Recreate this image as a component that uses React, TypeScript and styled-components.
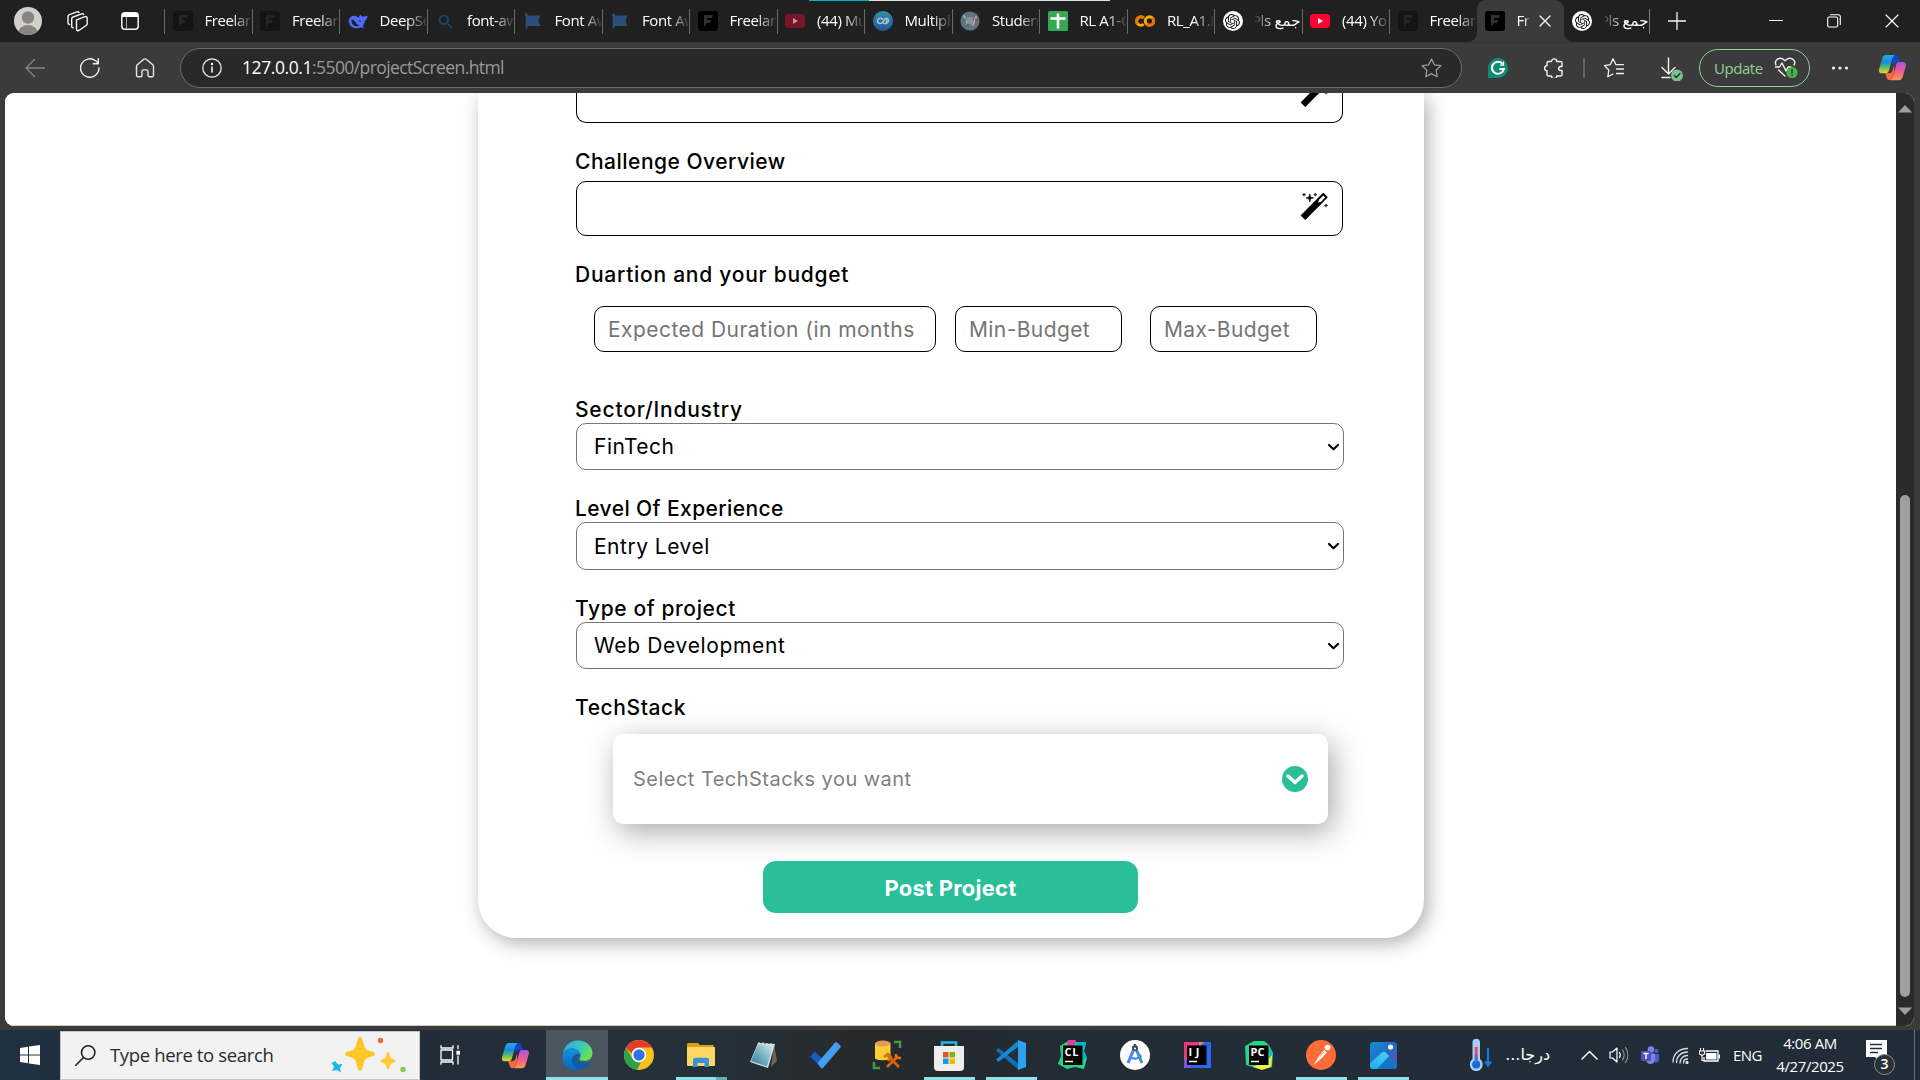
import React from "react";
import styled, { createGlobalStyle } from "styled-components";
import { SiOpenai } from "react-icons/si";

const Global = createGlobalStyle`
  * { box-sizing: border-box; }
  html, body { margin: 0; padding: 0; }
  body { width: 1920px; height: 1080px; overflow: hidden; background: #3b3b3b; font-family: "Open Sans", "Noto Sans", sans-serif; }
  svg { display: block; flex: none; }
`;

const ui = `"Open Sans", "Noto Sans", "DejaVu Sans", sans-serif`;
const form = `Inter, "Liberation Sans", sans-serif`;

const Screen = styled.div`
  width: 1920px; height: 1080px; display: flex; flex-direction: column; overflow: hidden; background: #3b3b3b;
`;

/* ---------- title bar ---------- */
const TitleBar = styled.header`
  height: 42px; flex: none; display: flex; background: #3b3b3b; position: relative;
`;
const TopStrip = styled.div`
  position: absolute; top: 0; left: 809px; width: 301px; height: 1px;
  background: linear-gradient(90deg, #00b5c4 60px, #d9e2dc 60px);
`;
const TitleDark = styled.div<{ $grow?: boolean; $side: "left" | "right" }>`
  height: 42px; background: #202020; display: flex; align-items: center; flex: ${p => (p.$grow ? "1" : "none")};
  border-radius: ${p => (p.$side === "left" ? "0 0 9px 0" : "0 0 0 9px")};
`;
const WindowTools = styled.div`
  width: 164px; height: 42px; padding-left: 14px; display: flex; align-items: center;
`;
const Gap = styled.div<{ $w: number }>`width: ${p => p.$w}px; flex: none;`;
const Tab = styled.div<{ $w?: number; $line?: boolean }>`
  width: ${p => p.$w ?? 87.5}px; height: 42px; flex: none; display: flex; align-items: center; padding-left: 8.5px; position: relative;
  &::before { content: ""; position: absolute; left: 0; top: 9px; width: 1px; height: 25px; background: ${p => (p.$line === false ? "transparent" : "#6a6a6a")}; }
`;
const TabIcon = styled.div`
  width: 20px; height: 20px; flex: none; display: flex; align-items: center; justify-content: center;
`;
const TabTitle = styled.div<{ $w?: number; $rtl?: boolean; $ls?: number }>`
  margin-left: 12px; width: ${p => p.$w ?? 46}px; height: 24px; overflow: hidden; white-space: nowrap; color: #fff;
  font: 15px/23px ${ui}; letter-spacing: ${p => p.$ls ?? -0.4}px; direction: ${p => (p.$rtl ? "rtl" : "ltr")};
  mask-image: linear-gradient(${p => (p.$rtl ? "270deg" : "90deg")}, #000 58%, rgba(0,0,0,0.1) 100%);
`;
const ActiveTab = styled.div`
  width: 87px; height: 42px; flex: none; display: flex; align-items: center; padding-left: 8px; background: #3b3b3b;
  border-radius: 9px 9px 0 0;
`;
const ActiveBack = styled.div`height: 42px; background: linear-gradient(#202020 24px, #3b3b3b 24px);`;
const WinControls = styled.div`
  flex: 1; height: 42px; display: flex; align-items: center; padding-left: 19px; position: relative;
  &::before { content: ""; position: absolute; left: 0; top: 9px; width: 1px; height: 25px; background: #7a7a7a; }
`;

/* ---------- toolbar ---------- */
const Toolbar = styled.nav`
  height: 51px; flex: none; display: flex; align-items: center; padding: 0 0 1px 25px; background: #3b3b3b; border-top: 1px solid #353535;
`;
const AddressBar = styled.div`
  width: 1282px; height: 40px; flex: none; display: flex; align-items: center; border: 1px solid #6b6b6b; border-radius: 20px;
  background: #292929; padding: 0 19px 0 21px;
`;
const Url = styled.div`
  flex: 1; margin-left: 20px; padding-bottom: 1px; font: 17.5px/28px ${ui}; letter-spacing: -0.59px; color: #999; white-space: nowrap;
`;
const UrlHost = styled.span`color: #fff; letter-spacing: -0.42px;`;
const Separator = styled.div`width: 2px; height: 20px; background: #606060;`;
const UpdateButton = styled.button`
  width: 111px; height: 38px; border: 1px solid #93cf96; border-radius: 19px; background: transparent; color: #93cf96; padding: 0 11px 0 14px;
  display: flex; align-items: center; justify-content: space-between; font: 15px/22px ${ui}; letter-spacing: -0.45px;
`;

/* ---------- page ---------- */
const Viewport = styled.main`
  height: 933px; width: 1909px; margin-left: 5px; flex: none; display: flex; border-radius: 9px; overflow: hidden; background: #fff;
`;
const PageArea = styled.div`
  width: 1891px; height: 933px; padding-left: 473px; overflow: hidden; background: #fff; border-bottom: 1px solid #ccc;
`;
const Card = styled.form`
  width: 946px; height: 845px; padding: 0 80px 0 98px; display: flex; flex-direction: column; align-items: flex-start; background: #fff;
  border-radius: 0 0 38px 38px; box-shadow: 4px 5px 19px rgba(0, 0, 0, 0.32);
`;
const WandField = styled.div<{ $cut?: boolean }>`
  width: 767px; height: ${p => (p.$cut ? 30 : 55)}px; flex: none; border: 1px solid #000; border-top-width: ${p => (p.$cut ? 0 : 1)}px;
  border-radius: ${p => (p.$cut ? "0 0 10px 10px" : "10px")}; display: flex; justify-content: flex-end;
  align-items: ${p => (p.$cut ? "flex-end" : "flex-start")}; padding: ${p => (p.$cut ? "0 13px 14px 0" : "10px 13px 0 0")}; overflow: hidden;
`;
const Label = styled.label<{ $mt: number; $ls?: number }>`
  height: 26px; margin-top: ${p => p.$mt}px; padding-top: 1px; margin-left: -1px; flex: none; color: #000; font: 500 21px/26px ${form};
  letter-spacing: ${p => p.$ls ?? 0}px; white-space: nowrap;
`;
const Spacer = styled.div<{ $h: number }>`height: ${p => p.$h}px; flex: none;`;
const BudgetRow = styled.div`height: 46px; margin: 19px 0 0 18px; display: flex; flex: none;`;
const BudgetInput = styled.input<{ $w: number; $ml?: number; $ls?: number }>`
  width: ${p => p.$w}px; height: 46px; margin: 0 0 0 ${p => p.$ml ?? 0}px; padding: 0 21px 0 13px; border: 1px solid #000; border-radius: 10px;
  background: #fff; font: 21px/26px ${form}; letter-spacing: ${p => p.$ls ?? 0}px; outline: none;
  &::placeholder { color: #757575; opacity: 1; }
`;
const SelectBox = styled.div<{ $h?: number; $ls?: number }>`
  width: 768px; height: ${p => p.$h ?? 47}px; margin-top: 1px; flex: none; border: 1px solid #767676; border-radius: 10px; padding: 1px 3px 0 17px;
  display: flex; align-items: center; justify-content: space-between; color: #000; font: 21px/26px ${form}; letter-spacing: ${p => p.$ls ?? 0}px;
`;
const StackPicker = styled.div`
  width: 715px; height: 90px; margin: 14px 0 0 37px; flex: none; border-radius: 10px; padding: 0 20px; display: flex; align-items: center;
  justify-content: space-between; background: #fff; color: #808080; font: 20px/26px ${form}; letter-spacing: 0.47px;
  box-shadow: 5px 8px 30px rgba(0, 0, 0, 0.34);
`;
const SubmitButton = styled.button`
  width: 375px; height: 52px; margin: 37px 0 0 187px; flex: none; border: 0; border-radius: 13px; background: #29bf99; color: #fff;
  font: 700 22px/26px ${form}; letter-spacing: 0.2px; padding: 1px 0 0;
`;
const Scrollbar = styled.div`
  width: 18px; height: 933px; background: #2b2b2b; display: flex; flex-direction: column; align-items: center; padding: 12px 0 11px;
`;
const Thumb = styled.div`width: 10px; height: 502px; margin-top: auto; border-radius: 5px; background: #9f9f9f;`;

/* ---------- taskbar ---------- */
const Taskbar = styled.footer`
  height: 50px; margin-top: 4px; flex: none; display: flex; align-items: center;
  background: linear-gradient(90deg, #203040 0, #222d39 420px, #24303a 700px, #272a2c 860px, #24292e 930px, #222d38 1100px, #212c38 1914px);
`;
const StartButton = styled.div`width: 60px; padding-left: 20px; flex: none;`;
const SearchBox = styled.div`
  width: 360px; height: 49px; flex: none; background: #f2f2f2; border: 1px solid #c8c8c8; display: flex; align-items: center; padding-left: 14px;
`;
const SearchText = styled.div`
  margin-left: 14px; width: 220px; color: #2b2b2b; font: 18.5px/28px ${ui}; letter-spacing: -0.36px; white-space: nowrap;
`;
const TaskItem = styled.div<{ $w?: number; $active?: boolean; $open?: boolean; $stack?: boolean }>`
  width: ${p => p.$w ?? 62}px; height: 50px; flex: none; display: flex; align-items: center; justify-content: center; position: relative;
  background: ${p => (p.$active ? "#4c5660" : "transparent")};
  &::after {
    content: ""; position: absolute; bottom: 0; height: 3px; left: ${p => (p.$active ? 0 : 6)}px; right: ${p => (p.$active ? 0 : 5)}px;
    background: ${p => p.$stack ? "linear-gradient(90deg, #8ce3ea 40px, #6ba9b3 40px)" : p.$active || p.$open ? "#8ce3ea" : "transparent"};
  }
`;
const Weather = styled.div`
  width: 44px; margin-left: 14px; direction: rtl; color: #fff; font: 16px/26px "DejaVu Sans", sans-serif; white-space: nowrap;
`;
const Lang = styled.div`width: 30px; margin-left: 13px; color: #fff; font: 15px/24px ${ui}; letter-spacing: -0.6px;`;
const Clock = styled.div`
  width: 80px; margin-left: 7px; color: #fff; font: 15px/23px ${ui}; letter-spacing: -0.42px; text-align: center; white-space: nowrap;
`;
const Notice = styled.div`width: 32px; height: 34px; margin-left: 16px; position: relative; margin-top: 4px;`;
const NoticeCount = styled.div`
  position: absolute; left: 8px; top: 14px; width: 21px; height: 21px; border-radius: 50%; border: 1px solid #8b8f93; background: #2b3035; color: #fff;
  font: 600 14px/18px ${ui}; text-align: center;
`;
const DesktopEdge = styled.div`width: 6px; height: 50px; margin-left: auto; border-left: 1px solid #66707a;`;

/* ---------- drawings ---------- */
const stroke = (color: string, width = 1.3) => ({ fill: "none", stroke: color, strokeWidth: width, strokeLinecap: "round" as const, strokeLinejoin: "round" as const });

const FreelanceIcon = ({ dim }: { dim?: boolean }) => (
  <svg width="20" height="20" viewBox="0 0 20 20"><rect width="20" height="20" rx="3" fill={dim ? "#141414" : "#000"} />
    <path d="M6 4h9l-1 3H9v2h4l-1 3H9l-3 4z" fill={dim ? "#242424" : "#303030"} /></svg>
);
const DeepSeekIcon = () => (
  <svg width="20" height="20" viewBox="0 0 20 20" fill="#4d6bfe">
    <path d="M1 8.600C2 5.400 5.600 4 8.800 5.400c1 .5 1.500 1.200 2.200 1.200.3-1.200.5-2.300 1.800-3.200.3 1.300 1 2.300 2.300 2.300 1.500 0 2.300-.8 4.300-1-.1 3-1.200 4.300-2.700 5.200-.1 2.200-.9 3.800-2.100 5.200l1.600 1.300c-1.300.7-2.700.4-3.500-.1-2.700 1.700-7.600 1.400-10-1.300C1.100 13.300.300 10.700 1 8.600z" />
    <path d="M3.800 8.500c2.400.3 3.500 2.400 4.700 4.100 1.100 1.500 2.300 1.700 3.200 1.800-2.800 1.200-6.400.4-7.700-2-.6-1.200-.7-2.600-.2-3.900zM11 9.300c1.200-.2 2 .6 2 1.600-1 .2-1.900-.5-2-1.600z" fill="#202020" />
  </svg>
);
const SearchGlyph = () => <svg width="14" height="14" viewBox="0 0 14 14" {...stroke("#1b4468", 2)}><circle cx="5.800" cy="5.800" r="4.300" /><path d="M9 9l4 4" /></svg>;
const FlagIcon = () => (
  <svg width="20" height="20" viewBox="0 0 20 20" fill="#2b4f78"><circle cx="3.500" cy="4" r="1.700" /><path d="M2.700 4h1.700v13.500H2.700zM3.500 4.600h14l-2 5.200 2 5.200h-14z" /></svg>
);
const YoutubeIcon = ({ dim }: { dim?: boolean }) => (
  <svg width="20" height="20" viewBox="0 0 20 20"><rect y="3" width="20" height="14" rx="3.500" fill={dim ? "#7a1428" : "#ff0033"} /><path d="M8 7l5 3-5 3z" fill={dim ? "#b0a0a4" : "#fff"} /></svg>
);
const MultiIcon = () => (
  <svg width="20" height="20" viewBox="0 0 20 20"><defs><linearGradient id="mu" x1="0" y1="0" x2="0" y2="1"><stop stopColor="#2d92a8" /><stop offset="1" stopColor="#2553a0" /></linearGradient></defs>
    <circle cx="10" cy="10" r="10" fill="url(#mu)" /><path d="M9.500 8.200c-1.800-1.500-5-1-5 1.800 0 3 3.800 3.200 5.200 1.200L12 7.800c1.300-1.300 3.500-.3 3.500 1.800 0 2.600-2.500 3-5 2.900M13.500 12.500V8.500" {...stroke("#b0bcc6", 1.500)} /></svg>
);
const StudentIcon = () => (
  <svg width="20" height="20" viewBox="0 0 20 20"><rect width="20" height="20" rx="2" fill="#1c2733" /><circle cx="10" cy="10" r="9.500" fill="#68727b" />
    <path d="M4 5l4 9 2-6 3 6 3-8" {...stroke("#9fa9ae", 2)} /><path d="M7 6h6v7H7z" fill="#87919a" /><circle cx="4.500" cy="9" r="1.500" fill="#2f6f9b" /><circle cx="16.500" cy="9" r="1.400" fill="#a0483a" /><circle cx="8" cy="14" r="1.200" fill="#306b99" /></svg>
);
const SheetsIcon = () => <svg width="20" height="20"><rect width="20" height="20" rx="1.500" fill="#34a853" /><path d="M10 2.500v15M2.500 7.500h15" stroke="#fff" strokeWidth="2.600" /></svg>;
const ColabIcon = () => (
  <svg width="20" height="20" viewBox="0 0 20 20" fill="none" strokeWidth="3"><path d="M8.700 7A4.200 4.200 0 1 0 8.700 13.200" stroke="#f9ab00" /><circle cx="14.500" cy="10" r="4.200" stroke="#f9ab00" /><path d="M11.500 13a4.200 4.200 0 0 0 6-6" stroke="#e8710a" /><path d="M8.700 7a4.200 4.200 0 0 0-6 6" stroke="#e8710a" /></svg>
);
const GptDisc = styled.div`width: 20px; height: 20px; border-radius: 50%; background: #fff; color: #111; display: flex; align-items: center; justify-content: center; flex: none;`;
const GptIcon = () => <GptDisc><SiOpenai size={15} /></GptDisc>;

const CopilotIcon = ({ id }: { id: string }) => (
  <svg width="29" height="27" viewBox="0 0 29 27">
    <defs>
      <linearGradient id={id + "a"} x1="0" y1="0" x2="0" y2="1"><stop stopColor="#20a8f0" /><stop offset=".4" stopColor="#178cdb" /><stop offset=".7" stopColor="#64bd63" /><stop offset="1" stopColor="#f2d41b" /></linearGradient>
      <linearGradient id={id + "b"} x1="0" y1="0" x2="0" y2="1"><stop stopColor="#a653f1" /><stop offset=".5" stopColor="#ed5a92" /><stop offset="1" stopColor="#ff9a4c" /></linearGradient>
    </defs>
    <path d="M14 1h3.500c1.700 0 2.600 1 3 2.600L21.800 8h-4l-3 3z" fill="#1445c8" />
    <path d="M8 1h8.500c-1.500 1-2 2.800-2.600 5l-3 10.500c-.5 1.700-1.500 2.700-3.200 2.700H3.500C1 19.200.5 17.200 1.100 15L4.200 4.500C4.900 2.300 6 1 8 1z" fill={`url(#${id}a)`} />
    <path d="M21 8h4c2.600 0 3.400 2 2.800 4.200l-3.100 10.500c-.7 2.200-1.900 3.500-3.900 3.500h-8.300c1.700-1 2.100-2.700 2.700-4.700l3-10.700C18.700 9 19.500 8 21 8z" fill={`url(#${id}b)`} />
    <path d="M7 19.200h4c1.900 0 3-.9 3.600-2.700l1.500-5.200v6.700l-1.500 5c-.5 1.600-1.300 2.800-2.600 3.200-2 0-2.900-1-3.300-2.600z" fill="#ff6a3c" />
  </svg>
);

const WandIcon = () => (
  <svg width="30" height="29" viewBox="0 0 30 29">
    <path d="M1.600 23.500L23.600 1.200Q24.300.6 25 1.300L28.200 4.600Q28.800 5.300 28.200 6L6.300 28z" fill="#000" />
    <path d="M20.200 7.500L24.300 3.600l1.800 1.800-4 4.300-3.200 1.100z" fill="#fff" />
    <path d="M10.800 2l.9 3 2.900.9-2.900.9-.9 3.200-.9-3.200L7 5.900 9.900 5z" fill="#000" stroke="#000" strokeWidth=".6" />
    <path d="M5 1v3.200M3.400 2.600h3.200M16.300 1v3.200M14.700 2.600h3.200M27 12v3.200M25.400 13.600h3.200" stroke="#222" strokeWidth="1.200" />
  </svg>
);
const Caret = () => <svg width="13" height="9" viewBox="0 0 13 9" {...stroke("#000", 2.200)}><path d="M2 2l4.500 4.300L11 2" /></svg>;

const EdgeIcon = () => (
  <svg width="31" height="31" viewBox="0 0 31 31">
    <defs><linearGradient id="e1" x1="0" y1="0" x2="1" y2=".4"><stop stopColor="#27a8e8" /><stop offset=".6" stopColor="#37c8bf" /><stop offset="1" stopColor="#67df58" /></linearGradient>
      <linearGradient id="e2" x1="0" y1="0" x2="0" y2="1"><stop stopColor="#1690dc" /><stop offset="1" stopColor="#0868bf" /></linearGradient></defs>
    <path d="M1 14C2 6 8 .5 15.500.5 24 .5 30.500 6 30.500 13c0 5-3.500 8-8 8-3.500 0-5.300-1-5-2.300.2-1 1.300-1.500 1-4C18 11 14.500 8.500 10 8.500 5 8.500 2 11 1 14z" fill="url(#e1)" />
    <path d="M.5 17C1 11.500 5 8.500 10 8.500c4.500 0 8.200 2.500 8.500 6.200-5-2-9 1.300-8.500 6 .5 4.500 4.300 8 9 9-9 2.500-19-3-18.500-12.700z" fill="url(#e2)" />
    <path d="M18 14.500c-4-.8-8 1.700-8 6.300 0 4.700 4 8.700 9 8.700 4.600-1 8-3.700 9.600-6.600.4-.8-.3-1.200-1-.8-3.500 2-8.800 1.500-10.900-1.300-1.600-2.100-.6-4.300 1.300-6.300z" fill="#115aa5" />
  </svg>
);
const ChromeIcon = () => (
  <svg width="30" height="30" viewBox="0 0 30 30"><circle cx="15" cy="15" r="15" fill="#fbc116" />
    <path d="M15 0c5.500 0 10.400 3 13 7.500H15c-4 0-7 3-7.500 6L2 7.500C4.700 3 9.500 0 15 0z" fill="#e33b2e" />
    <path d="M2 7.500l6.500 11.300c2 3.400 6 4.400 8.500 3.500L13 29.900C5.500 29 0 22.800 0 15c0-2.700.7-5.300 2-7.500z" fill="#2da14b" />
    <circle cx="15" cy="15" r="7.200" fill="#fff" /><circle cx="15" cy="15" r="5.700" fill="#2c73ea" /></svg>
);
const FolderIcon = () => (
  <svg width="28" height="24" viewBox="0 0 28 24"><path d="M0 1.500C0 .7.500 0 1.500 0H11l2 2h13.500v4H0z" fill="#dca010" /><rect y="4" width="28" height="19" rx="1" fill="#ffd765" />
    <path d="M6 24v-7c0-1.500 1-2.300 2.300-2.300h11.400c1.300 0 2.300.8 2.300 2.300v7h-4.500v-4h-7v4z" fill="#3d91d6" /></svg>
);
const NotepadIcon = () => (
  <svg width="29" height="28" viewBox="0 0 29 28"><defs><linearGradient id="np" x1="0" y1="1" x2="1" y2="0"><stop stopColor="#287c91" /><stop offset=".6" stopColor="#88bdc9" /><stop offset="1" stopColor="#d5e9ed" /></linearGradient></defs>
    <path d="M25 3l3 17-6 6z" fill="#6a6454" /><path d="M9 2l17 1-7 24L1 21z" fill="#d8e1e2" /><path d="M9 3l15 1.500-6 21L2 20z" fill="url(#np)" /><path d="M10 1v3M14 1v3M18 2v3M22 2v3" stroke="#ddd" /></svg>
);
const TodoIcon = () => <svg width="31" height="28" viewBox="0 0 31 28"><path d="M0 15.500L5 10.500l9 9-2 8z" fill="#185abd" /><path d="M7.500 22L25 1.500c.6-.7 1.400-.7 2 0l3.400 3c.6.6.6 1.200 0 1.900L13 27c-.6.6-1.400.6-2 0z" fill="#41a0ee" /></svg>;
const DbToolIcon = () => (
  <svg width="30" height="30" viewBox="0 0 30 30"><path d="M3 3v15c0 3 15.500 3 15.500 0V3z" fill="#f9cd35" /><ellipse cx="10.800" cy="3.500" rx="7.800" ry="3" fill="#e89b57" /><path d="M22 2h6v6M2 22v6h6" fill="none" stroke="#419c45" strokeWidth="2.500" />
    <path d="M15 27l11-11M15 15l12 12" stroke="#d9650d" strokeWidth="2.700" /><path d="M12 17l4-3 3 3-3 4M24 14v4h5" fill="none" stroke="#e36c0d" strokeWidth="2.500" /></svg>
);
const StoreIcon = () => (
  <svg width="30" height="31" viewBox="0 0 30 31"><path d="M8 7V2.500h14V7" fill="none" stroke="#27b1ed" strokeWidth="2.600" /><path d="M0 6h30v21c0 2.500-1 4-4 4H4c-3 0-4-1.500-4-4z" fill="#eee" />
    <path d="M9 12h5.500v5.500H9z" fill="#f05123" /><path d="M15.500 12H21v5.500h-5.500z" fill="#7eb900" /><path d="M9 18.500h5.500V24H9z" fill="#00a3ee" /><path d="M15.500 18.500H21V24h-5.500z" fill="#feb800" /></svg>
);
const CodeIcon = () => (
  <svg width="30" height="30" viewBox="0 0 30 30"><path d="M0 10.500L2.500 8 23 24v6z" fill="#0d70b8" /><path d="M0 19.500L2.500 22 23 6V0z" fill="#1687d2" /><path d="M22 0l8 3v24l-8 3z" fill="#2ba3ee" /><path d="M22 8v14l-9-7z" fill="#252e37" /></svg>
);
const LogoText = styled.text`font: 700 11px "Open Sans", sans-serif; fill: #fff;`;
const JetBrains = ({ name, kind }: { name: string; kind: "cl" | "ij" | "pc" }) => (
  <svg width="30" height="30" viewBox="0 0 30 30">
    {kind === "cl" && <><path d="M2 6L10 1l9 1 9 1-2 8 3 7-3 11-9-2-8 2-9-5 3-8z" fill="#20d785" /><path d="M18 2l10 0-2 9 3 7-8 3z" fill="#08b6c9" /><path d="M10 0h8l-2 7h-7z" fill="#e93c99" /></>}
    {kind === "ij" && <><path d="M2 2h27v26H2z" fill="#2768ee" /><path d="M2 2h15l-8 15-7 4z" fill="#ed3979" /><path d="M2 20l7-4v12H2z" fill="#7855df" /><path d="M17 2h5l-5 5z" fill="#f58b3a" /></>}
    {kind === "pc" && <><path d="M1 6l9-5 10 0 5 4 4 8-1 14-10 2-9-2-7-2z" fill="#25d789" /><path d="M22 9l6 7-1 11-9 3-9-3 12-6z" fill="#edf33e" /><path d="M24 8l5 5-4 6z" fill="#16b8dc" /></>}
    <rect x="5" y="5.500" width="19.500" height="19.500" fill="#000" /><LogoText x="6.500" y="15.500" textLength={kind === "ij" ? 11 : 14}>{name}</LogoText><path d="M7 21.500h8" stroke="#fff" strokeWidth="1.500" />
  </svg>
);
const StudioIcon = () => (
  <svg width="30" height="30" viewBox="0 0 30 30"><circle cx="15" cy="15" r="15" fill="#fff" /><path d="M14 9L8 23M16 9l6 14" stroke="#4285f4" strokeWidth="3" /><path d="M9.500 16c3 3.500 8 3.500 11 0" fill="none" stroke="#4b8df5" strokeWidth="2.500" /><path d="M19 13l3 3-2 3z" fill="#27a85a" /><circle cx="15" cy="8" r="3" fill="#394a58" /><path d="M15 4v3" stroke="#394a58" strokeWidth="2" /><circle cx="15" cy="8.500" r="1" fill="#fff" /></svg>
);
const PostmanIcon = () => (
  <svg width="30" height="30" viewBox="0 0 30 30"><circle cx="15" cy="15" r="15" fill="#ff6c37" /><circle cx="21.500" cy="7.500" r="2.800" fill="#fff" /><path d="M18 10l2.800 2.200-4.300 5.300-9 7.500 5.500-9z" fill="#fff" /><path d="M18 11.500l-4 5" stroke="#ff8d65" /></svg>
);
const PhotosIcon = () => (
  <svg width="27" height="27" viewBox="0 0 27 27"><defs><linearGradient id="ph" x1="0" y1="0" x2="1" y2="1"><stop stopColor="#128ddb" /><stop offset=".5" stopColor="#246bbc" /><stop offset="1" stopColor="#704bb5" /></linearGradient><linearGradient id="ph2" x1="0" y1="1" x2="1" y2="0"><stop stopColor="#1ea9e7" /><stop offset="1" stopColor="#4ad4fa" /></linearGradient></defs>
    <rect width="27" height="27" rx="3" fill="url(#ph)" /><path d="M0 21L12 10.500c1.200-1 2.300-1 3.500 0L27 21v3c0 2-1 3-3 3H3c-2 0-3-1-3-3z" fill="#1673c6" /><path d="M0 21L12 10.500c1.200-1 2.300-1 3.500 0l3.500 3.500L7 27H3c-2 0-3-1-3-3z" fill="url(#ph2)" /><circle cx="20.500" cy="5" r="2.600" fill="#e7f4ff" /></svg>
);

const tabs: { icon: React.ReactNode; title: string; rtl?: boolean }[] = [
  { icon: <FreelanceIcon dim />, title: "Freelan" }, { icon: <FreelanceIcon dim />, title: "Freelan" },
  { icon: <DeepSeekIcon />, title: "DeepSe" }, { icon: <SearchGlyph />, title: "font-aw" },
  { icon: <FlagIcon />, title: "Font Aw" }, { icon: <FlagIcon />, title: "Font Aw" },
  { icon: <FreelanceIcon />, title: "Freelan" }, { icon: <YoutubeIcon dim />, title: "(44) Mu" },
  { icon: <MultiIcon />, title: "Multipl" }, { icon: <StudentIcon />, title: "Student" },
  { icon: <SheetsIcon />, title: "RL A1-G" }, { icon: <ColabIcon />, title: "RL_A1.i" },
  { icon: <GptIcon />, title: "جمع Pls", rtl: true }, { icon: <YoutubeIcon />, title: "(44) Yo" },
  { icon: <FreelanceIcon dim />, title: "Freelan" },
];

export default function App() {
  return (
    <Screen>
      <Global />
      <TitleBar>
        <TitleDark $side="left">
          <WindowTools>
            <svg width="28" height="28" viewBox="0 0 28 28"><defs><clipPath id="av"><circle cx="14" cy="14" r="14" /></clipPath></defs><g clipPath="url(#av)"><rect width="28" height="28" fill="#d2d0cd" /><circle cx="14" cy="10.500" r="6.200" fill="#8a8582" /><ellipse cx="14" cy="25.500" rx="9.500" ry="7.500" fill="#8a8582" /></g></svg>
            <Gap $w={25} />
            <svg width="21" height="21" viewBox="0 0 21 21" {...stroke("#f4f4f4", 1.400)}><path d="M9.500 8.800l8.500-3.100c1.200-.4 2.200.2 2.200 1.400v5.700c0 .8-.4 1.400-1.200 1.700l-6.700 4.700c-1.500 1-2.800.4-2.800-1.200z" /><path d="M6.300 16.700c-1 .2-1.600-.4-1.600-1.500V8.100c0-1 .4-1.700 1.400-2.100l8.600-3.200c.9-.3 1.600 0 1.900.8" /><path d="M2.600 13.500C1.400 13.400 1 12.700 1 11.700V5.600c0-1 .5-1.600 1.400-2L10 .9c.9-.3 1.500-.1 2 .6" /></svg>
            <Gap $w={33} />
            <svg width="18" height="18" viewBox="0 0 18 18"><rect x=".8" y=".8" width="16.400" height="16.400" rx="3" fill="none" stroke="#f4f4f4" strokeWidth="1.500" /><path d="M1 5V3.500C1 2 2 1 3.500 1h11C16 1 17 2 17 3.500V5z" fill="#fff" /><path d="M5.500 5v12" stroke="#aaa" strokeWidth="1" /></svg>
          </WindowTools>
          {tabs.map((t, i) => (
            <Tab key={i}><TabIcon>{t.icon}</TabIcon><TabTitle $rtl={t.rtl}>{t.title}</TabTitle></Tab>
          ))}
        </TitleDark>
        <ActiveBack>
          <ActiveTab>
            <FreelanceIcon /><TabTitle $w={13}>Fr</TabTitle><Gap $w={9} />
            <svg width="12" height="12" viewBox="0 0 12 12" {...stroke("#f4f4f4", 1.400)}><path d="M1 1l10 10M11 1L1 11" /></svg>
          </ActiveTab>
        </ActiveBack>
        <TitleDark $side="right" $grow>
          <Tab $w={85} $line={false}><GptIcon /><TabTitle $rtl>جمع Pls</TabTitle></Tab>
          <WinControls>
            <svg width="18" height="18" viewBox="0 0 18 18" {...stroke("#f4f4f4", 1.300)}><path d="M9 .5v17M.5 9h17" /></svg>
            <Gap $w={83} />
            <svg width="14" height="14" viewBox="0 0 14 14" {...stroke("#fff", 1)}><path d="M.5 6.500h13" /></svg>
            <Gap $w={44} />
            <svg width="14" height="14" viewBox="0 0 14 14" {...stroke("#fff", 1.100)}><rect x=".7" y="3" width="10" height="10" rx="1.500" /><path d="M3.500.8h7.800c1.200 0 2 .8 2 2v7.700" /></svg>
            <Gap $w={44} />
            <svg width="14" height="14" viewBox="0 0 14 14" {...stroke("#fff", 1.100)}><path d="M1 1l12 12M13 1L1 13" /></svg>
          </WinControls>
        </TitleDark>
        <TopStrip />
      </TitleBar>

      <Toolbar>
        <svg width="20" height="20" viewBox="0 0 20 20" {...stroke("#858585", 1.300)}><path d="M19.500 10H1M9.500 1.500L1 10l8.500 8.500" /></svg>
        <Gap $w={35} />
        <svg width="20" height="20" viewBox="0 0 20 20" {...stroke("#f2f2f2", 1.400)}><path d="M19 10a9.200 9.200 0 1 1-3.500-7.200L18.300 5" /><path d="M18.300.8v5h-5" /></svg>
        <Gap $w={35} />
        <svg width="20" height="20" viewBox="0 0 20 20" {...stroke("#e9e9e9", 1.400)}><path d="M1.500 8.500c0-.7.200-1.200.8-1.700L8.800 1.300c.8-.6 1.600-.6 2.400 0l6.500 5.500c.6.500.8 1 .8 1.700v8.700c0 1-.6 1.600-1.600 1.600h-2.300c-1 0-1.600-.6-1.600-1.600v-4c0-.8-.5-1.300-1.300-1.300H8.300c-.8 0-1.300.5-1.300 1.300v4c0 1-.6 1.600-1.600 1.600H3.100c-1 0-1.600-.6-1.600-1.600z" /></svg>
        <Gap $w={25} />
        <AddressBar>
          <svg width="20" height="20" viewBox="0 0 20 20" {...stroke("#f2f2f2", 1.200)}><circle cx="10" cy="10" r="9.200" /><path d="M10 9v5" strokeWidth="1.600" /><circle cx="10" cy="6" r=".6" fill="#fff" /></svg>
          <Url><UrlHost>127.0.0.1</UrlHost>:5500/projectScreen.html</Url>
          <svg width="21" height="20" viewBox="0 0 21 20" {...stroke("#9a9a9a", 1.300)}><path d="M10.500 1l2.800 5.800 6.500.9-4.700 4.500 1.100 6.500-5.700-3.100-5.700 3.100 1.100-6.500L1.200 7.700l6.500-.9z" /></svg>
        </AddressBar>
        <Gap $w={26} />
        <svg width="20" height="20" viewBox="0 0 20 20"><path d="M0 10A10 10 0 1 1 10 20H0z" fill="#0f8b78" /><path d="M14.800 6.200A6 6 0 1 0 15.800 11h-4.500" fill="none" stroke="#fff" strokeWidth="2.100" /><path d="M15.500 3.500v3.700H12" fill="none" stroke="#fff" strokeWidth="1.200" /></svg>
        <Gap $w={36} />
        <svg width="20" height="20" viewBox="0 0 20 20" {...stroke("#f2f2f2", 1.400)}><path d="M4.500 3.500h3a2.600 2.600 0 0 1 5.200 0h3.800c.9 0 1.500.6 1.500 1.500v3.500h-1.300a2 2 0 0 0 0 4H18v4c0 .9-.6 1.500-1.500 1.500h-3.800a2.600 2.600 0 0 1-5.200 0H4.500c-.9 0-1.500-.6-1.500-1.500v-3.700a2.500 2.500 0 0 1 0-5V5c0-.9.6-1.500 1.500-1.500z" /></svg>
        <Gap $w={19} /><Separator /><Gap $w={19} />
        <svg width="20" height="20" viewBox="0 0 20 20" {...stroke("#f2f2f2", 1.300)}><path d="M12 6.700L9 .8 6.200 6.700l-5.600 1L4.800 12l-1 6.800L9 16M12 6.700h7.500M12.500 11h7M12.500 15.500h7" /></svg>
        <Gap $w={36} />
        <svg width="24" height="26" viewBox="0 0 24 26"><path d="M8.500 3v16M2 12.500L8.500 19l6.500-6.500M2 22.500h8" {...stroke("#f2f2f2", 1.400)} /><circle cx="17" cy="20.500" r="6" fill="#79c18d" /><path d="M14.300 20.500l2 2 3.700-4" {...stroke("#26352a", 1.300)} /></svg>
        <Gap $w={15} />
        <UpdateButton type="button">Update
          <svg width="24" height="22" viewBox="0 0 24 22"><path d="M2 8C.2 4.500 3 1.200 6.200 1.200c2 0 3.500 1 4.800 2.500 1.300-1.500 2.800-2.500 4.800-2.500C19.500 1.200 22 5 20 8M1.500 10h4l2.500-4 4 8 2-4h3M4.500 13l6.500 6" {...stroke("#f2f2f2", 1.400)} /><circle cx="18" cy="15.500" r="5.600" fill="#4caf50" /><path d="M18 12.500v3.500M18 18v.4" {...stroke("#174b1a", 1.500)} /></svg>
        </UpdateButton>
        <Gap $w={20} />
        <svg width="20" height="4" viewBox="0 0 20 4" fill="#f2f2f2"><circle cx="3.500" cy="2" r="1.600" /><circle cx="10" cy="2" r="1.600" /><circle cx="16.500" cy="2" r="1.600" /></svg>
        <Gap $w={28} />
        <CopilotIcon id="c1" />
      </Toolbar>

      <Viewport>
        <PageArea>
          <Card>
            <WandField $cut><WandIcon /></WandField>
            <Label $mt={25} $ls={0.5}>Challenge Overview</Label>
            <Spacer $h={7} />
            <WandField><WandIcon /></WandField>
            <Label $mt={25} $ls={0.74}>Duartion and your budget</Label>
            <BudgetRow>
              <BudgetInput $w={342} $ls={0.46} placeholder="Expected Duration (in months)" />
              <BudgetInput $w={167} $ml={19} $ls={0.4} placeholder="Min-Budget" />
              <BudgetInput $w={167} $ml={28} $ls={0.35} placeholder="Max-Budget" />
            </BudgetRow>
            <Label $mt={44} $ls={0.8}>Sector/Industry</Label>
            <SelectBox $ls={0.5}>FinTech<Caret /></SelectBox>
            <Label $mt={25} $ls={0.4}>Level Of Experience</Label>
            <SelectBox $h={48} $ls={0.5}>Entry Level<Caret /></SelectBox>
            <Label $mt={25} $ls={0.6}>Type of project</Label>
            <SelectBox $ls={0.66}>Web Development<Caret /></SelectBox>
            <Label $mt={25} $ls={0.6}>TechStack</Label>
            <StackPicker>Select TechStacks you want
              <svg width="26" height="26" viewBox="0 0 26 26"><circle cx="13" cy="13" r="13" fill="#29bf99" /><path d="M6 10l7 6.500L20 10" {...stroke("#fff", 3.400)} /></svg>
            </StackPicker>
            <SubmitButton type="button">Post Project</SubmitButton>
          </Card>
        </PageArea>
        <Scrollbar>
          <svg width="14" height="8" viewBox="0 0 14 8"><path d="M7 0l7 7.500H0z" fill="#9f9f9f" /></svg>
          <Thumb />
          <Spacer $h={10} />
          <svg width="14" height="8" viewBox="0 0 14 8"><path d="M7 8l7-7.500H0z" fill="#9f9f9f" /></svg>
        </Scrollbar>
      </Viewport>

      <Taskbar>
        <StartButton><svg width="20" height="20" viewBox="0 0 20 20" fill="#fff"><path d="M0 3l8-1.200v7.700H0zM9 1.600L20 0v9.500H9zM0 10.500h8v7.700L0 17zM9 10.500h11V20L9 18.400z" /></svg></StartButton>
        <SearchBox>
          <svg width="21" height="21" viewBox="0 0 21 21" {...stroke("#222", 1.600)}><circle cx="13.200" cy="7.500" r="6.700" /><path d="M8.500 12.500L.8 20.200" /></svg>
          <SearchText>Type here to search</SearchText>
          <svg width="78" height="36" viewBox="0 0 78 36"><path d="M30 0c3.500 0 3 10.500 6.500 12.500s8.500 2 8.500 4.500-5 2.500-8.500 4.500-3 12.500-6.500 12.500-3-10.500-6.500-12.500-8.500-2-8.500-4.500 5-2.500 8.500-4.500S26.500 0 30 0z" fill="#ffc629" /><path d="M58 15c2 0 1.500 5.500 3.500 6.500s4 1 4 2.500-2 1.500-4 2.500-1.500 6-3.500 6-1.500-5-3.500-6-4-1-4-2.500 2-1.500 4-2.500 1.500-6.500 3.500-6.500z" fill="#ffca37" /><path d="M5 24l3 3.500 4.500-.5-2.500 4 1 4.500-4-2.500-5 1 2-4.500-2.500-3.500z" fill="#1eb5f1" /><circle cx="50.500" cy="3.500" r="2.700" fill="#f26b38" /><circle cx="73" cy="32.500" r="2.700" fill="#8bc652" /></svg>
        </SearchBox>
        <TaskItem $w={60}><svg width="20" height="20" viewBox="0 0 20 20" {...stroke("#fff", 1.300)}><rect x="1" y="5" width="11.500" height="10" /><path d="M1 .7V3h12V.7M1 19.300V17h12v2.300M18 .7v3M18 11v8" /><path d="M17 6.300h2.400v2.800H17z" fill="#fff" /></svg></TaskItem>
        <Gap $w={4} />
        <TaskItem><CopilotIcon id="c2" /></TaskItem>
        <TaskItem $active><EdgeIcon /></TaskItem>
        <TaskItem><ChromeIcon /></TaskItem>
        <TaskItem $stack><FolderIcon /></TaskItem>
        <TaskItem><NotepadIcon /></TaskItem>
        <TaskItem><TodoIcon /></TaskItem>
        <TaskItem><DbToolIcon /></TaskItem>
        <TaskItem $open><StoreIcon /></TaskItem>
        <TaskItem $open><CodeIcon /></TaskItem>
        <TaskItem><JetBrains name="CL" kind="cl" /></TaskItem>
        <TaskItem><StudioIcon /></TaskItem>
        <TaskItem><JetBrains name="IJ" kind="ij" /></TaskItem>
        <TaskItem><JetBrains name="PC" kind="pc" /></TaskItem>
        <TaskItem $open><PostmanIcon /></TaskItem>
        <TaskItem $open><PhotosIcon /></TaskItem>
        <Gap $w={55} />
        <svg width="23" height="34" viewBox="0 0 23 34"><path d="M3.500 4c0-4.500 7.500-4.500 7.500 0v17c5 4 2.500 12-3.700 12S-1.500 25 3.500 21z" fill="#a4cffb" /><path d="M7.200 9v16" stroke="#e14c65" strokeWidth="3" /><circle cx="7.200" cy="26.500" r="4" fill="#126bd2" /><path d="M7.200 17v9" stroke="#4770cb" strokeWidth="2.500" /><path d="M19 10v17M16 23.500l3 4 3-4" fill="none" stroke="#1976db" strokeWidth="2.200" /></svg>
        <Weather>درجا...</Weather>
        <Gap $w={31} />
        <svg width="17" height="10" viewBox="0 0 17 10" {...stroke("#fff", 1.500)}><path d="M1 9l7.500-7.500L16 9" /></svg>
        <Gap $w={11} />
        <svg width="21" height="18" viewBox="0 0 21 18" {...stroke("#fff", 1.200)}><path d="M1 6v6h2.500L8 16V2L3.500 6zM10.500 6.500c1 1.500 1 3.500 0 5" /><path d="M13.500 4c2 3 2 7 0 10M16.500 1.500c3 4.500 3 10.500 0 15" stroke="#8a9299" /></svg>
        <Gap $w={11} />
        <svg width="18" height="19" viewBox="0 0 18 19"><circle cx="10" cy="3.500" r="3.300" fill="#7b83eb" /><circle cx="15.500" cy="5" r="2" fill="#5059c9" /><path d="M5 7.500h9v6c0 6-9 6-9 0z" fill="#7b83eb" /><path d="M14 8h4v5.500c0 2.500-2 3.500-4 3z" fill="#5059c9" /><rect y="5" width="10" height="10" rx="1" fill="#4b53bc" /><path d="M2.500 7.500h5M5 7.500v5.500" stroke="#fff" strokeWidth="1.400" /></svg>
        <Gap $w={13} />
        <svg width="17" height="17" viewBox="0 0 17 17" {...stroke("#d9dcdf", 1.300)}><path d="M1 15C1 7 7 1.500 15.500 1.500M4.500 15.500c0-6 4.500-10.500 11-10.500M8 16c0-4 3-7.500 7.500-7.500M11.500 16c0-2.500 1.500-4 4-4" /><circle cx="15" cy="15.500" r="1" fill="#fff" /></svg>
        <Gap $w={10} />
        <svg width="21" height="15" viewBox="0 0 21 15"><path d="M6.500 3H19v10H5V9" fill="none" stroke="#fff" strokeWidth="1.300" /><path d="M7 5h10.500v6.500H7zM19.500 6.500H21v4h-1.500z" fill="#fff" /><path d="M1.500 0v3M4.500 0v3M.5 3h5v3L3 7.500.5 6zM3 7v5.500h2" fill="none" stroke="#fff" strokeWidth="1.100" /></svg>
        <Lang>ENG</Lang>
        <Clock>4:06 AM<br />4/27/2025</Clock>
        <Notice><svg width="21" height="23" viewBox="0 0 21 23"><path d="M0 0h21v17h-7v5l-5-5H0z" fill="#fff" /><path d="M4 4.500h12M4 8.500h12M4 12.500h8" stroke="#24303b" strokeWidth="1.300" /></svg><NoticeCount>3</NoticeCount></Notice>
        <DesktopEdge />
      </Taskbar>
    </Screen>
  );
}
